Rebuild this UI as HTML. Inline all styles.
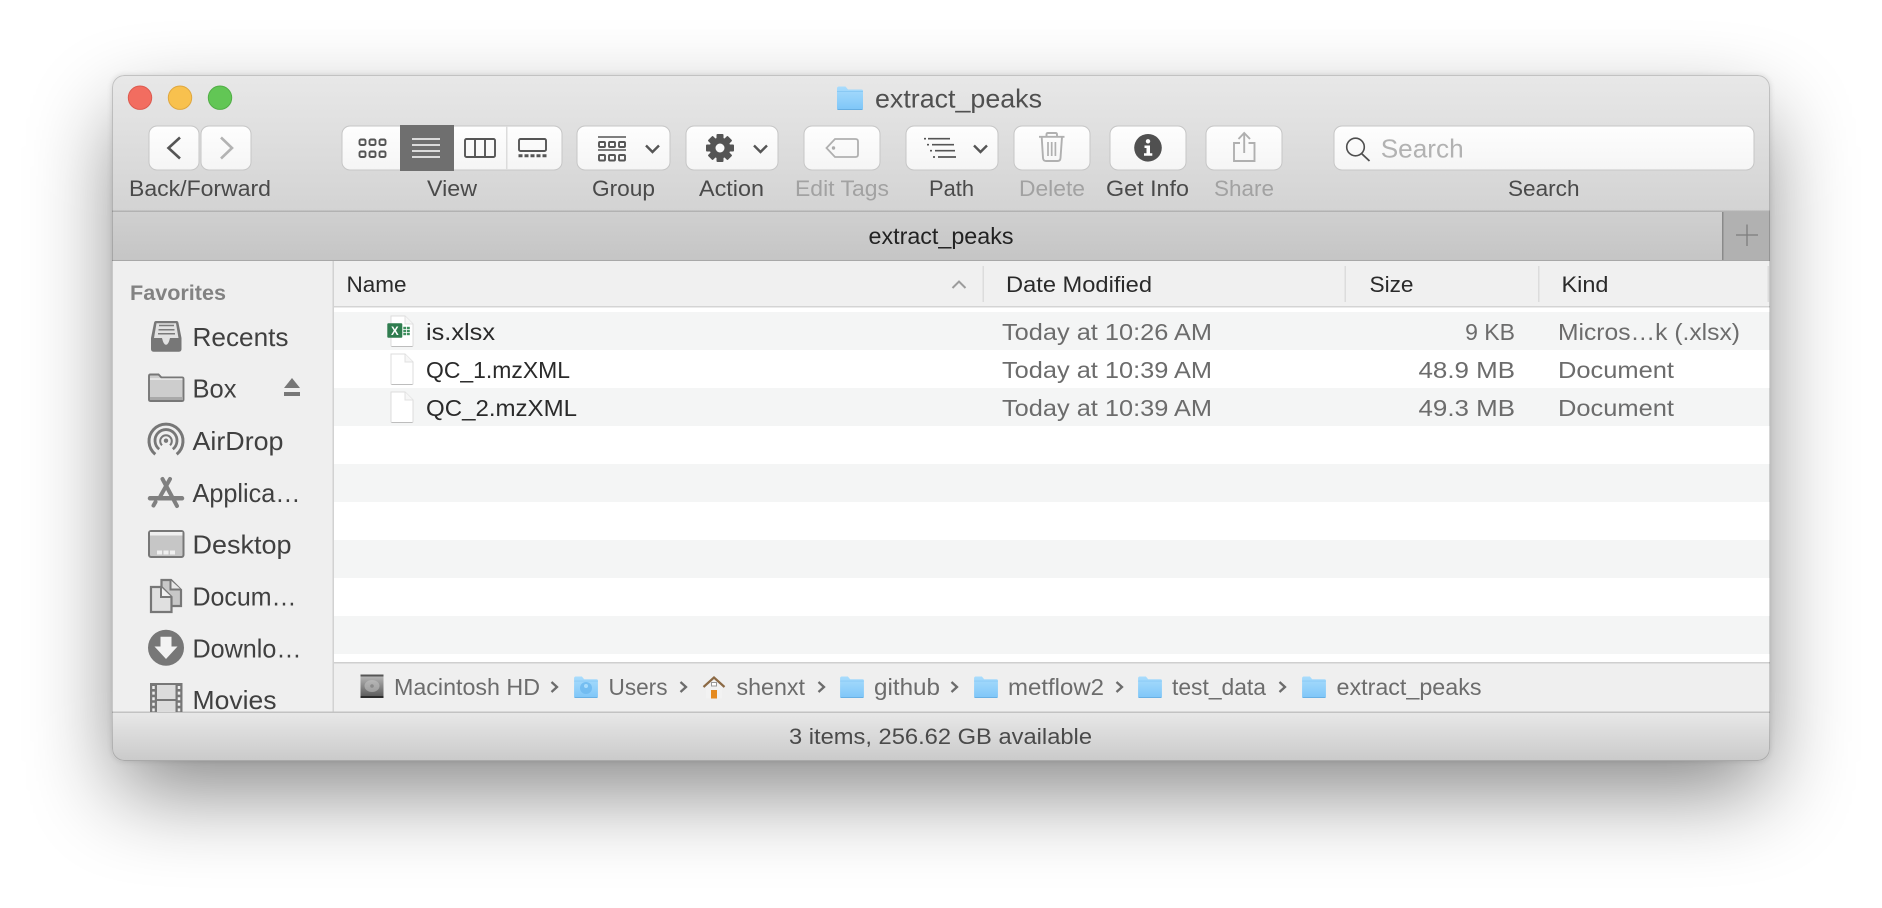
<!DOCTYPE html>
<html><head><meta charset="utf-8"><style>
html,body{margin:0;padding:0;background:#fff;width:1882px;height:908px;overflow:hidden}
#shadow{position:absolute;left:112px;top:75px;width:1658px;height:686px;border-radius:12px;box-shadow:0 36px 88px -6px rgba(0,0,0,.48),0 0 6px rgba(0,0,0,.12)}
svg{position:absolute;left:0;top:0}
text{font-family:"Liberation Sans",sans-serif;white-space:pre}
.l{font-size:22px;fill:#4a4a4a}
.d{font-size:22px;fill:#a2a2a2}
.s{font-size:26px;fill:#404040}
.n{font-size:23px;fill:#2a2a2a}
.g{font-size:23px;fill:#6c6c6c}
.h{font-size:22px;fill:#2a2a2a}
.p{font-size:23px;fill:#6c6c6c}
</style></head><body>
<div id="shadow"></div>
<svg width="1882" height="908" viewBox="0 0 1882 908" xmlns="http://www.w3.org/2000/svg">
<defs>
<clipPath id="win"><rect x="112" y="75" width="1658" height="686" rx="12"/></clipPath>
<clipPath id="side"><rect x="112" y="261" width="221" height="451"/></clipPath>
<linearGradient id="tb" x1="0" y1="0" x2="0" y2="1"><stop offset="0" stop-color="#e8e8e8"/><stop offset="1" stop-color="#d3d3d3"/></linearGradient>
<linearGradient id="tab" x1="0" y1="0" x2="0" y2="1"><stop offset="0" stop-color="#d0d0d0"/><stop offset="1" stop-color="#c5c5c5"/></linearGradient>
<linearGradient id="st" x1="0" y1="0" x2="0" y2="1"><stop offset="0" stop-color="#e8e8e8"/><stop offset="1" stop-color="#cacaca"/></linearGradient>
<linearGradient id="btn" x1="0" y1="0" x2="0" y2="1"><stop offset="0" stop-color="#fefefe"/><stop offset="1" stop-color="#f5f5f5"/></linearGradient>
<linearGradient id="fold" x1="0" y1="0" x2="0" y2="1"><stop offset="0" stop-color="#a9dcfc"/><stop offset="1" stop-color="#7ec6f8"/></linearGradient>
<linearGradient id="hd" x1="0" y1="0" x2="0" y2="1"><stop offset="0" stop-color="#bdbdbd"/><stop offset="1" stop-color="#555"/></linearGradient>
<symbol id="folder" viewBox="0 0 26 24" overflow="visible">
<path d="M0 2.5Q0 .5 2 .5H8.500L11 3.500H24.500Q26 3.500 26 5V22.500Q26 24 24.500 24H1.500Q0 24 0 22.500Z" fill="url(#fold)"/>
<path d="M0 5.500H26" stroke="#6fb9ec" stroke-width="1" opacity=".45"/>
<path d="M.5 23.500H25.500" stroke="#5fa8dc" stroke-width="1" opacity=".8"/>
</symbol>
<symbol id="page" viewBox="0 0 24 32" overflow="visible">
<path d="M1 1H15L23 9V30.500Q23 31.500 22 31.500H2Q1 31.500 1 30.500Z" fill="#fff" stroke="#dcdcdc" stroke-width="1"/>
<path d="M1.500 31.500H22.500" stroke="#bdbdbd" stroke-width="1"/>
<path d="M15 1V9H23" fill="#f6f6f6" stroke="#e0e0e0" stroke-width="1"/>
</symbol>
</defs>

<g clip-path="url(#win)">
<rect x="112" y="75" width="1658" height="136" fill="url(#tb)"/>
<rect x="112" y="211" width="1658" height="50" fill="url(#tab)"/>
<rect x="1722" y="212" width="48" height="49" fill="#b1b1b1"/>
<rect x="1722" y="212" width="1.500" height="49" fill="#8a8a8a"/>
<path d="M1747 224.500V246M1736 235H1758" stroke="#7d7d7d" stroke-width="1.300"/>
<rect x="112" y="210.500" width="1658" height="1.500" fill="#b2b2b2"/>
<rect x="112" y="260" width="1658" height="1.500" fill="#a8a8a8"/>

<!-- main -->
<rect x="334" y="261" width="1436" height="451" fill="#fff"/>
<rect x="334" y="261" width="1436" height="46" fill="#f0f0f0"/>
<rect x="334" y="306" width="1436" height="1.500" fill="#d4d4d4"/>
<rect x="334" y="312" width="1436" height="38" fill="#f4f5f5"/>
<rect x="334" y="388" width="1436" height="38" fill="#f4f5f5"/>
<rect x="334" y="464" width="1436" height="38" fill="#f4f5f5"/>
<rect x="334" y="540" width="1436" height="38" fill="#f4f5f5"/>
<rect x="334" y="616" width="1436" height="38" fill="#f4f5f5"/>
<rect x="334" y="662" width="1436" height="50" fill="#efefef"/>
<rect x="334" y="662" width="1436" height="1.500" fill="#cfcfcf"/>

<!-- sidebar -->
<rect x="112" y="261" width="221" height="451" fill="#efefef"/>
<rect x="332.500" y="261" width="1.500" height="451" fill="#d2d2d2"/>

<!-- status -->
<rect x="112" y="712" width="1658" height="49" fill="url(#st)"/>
<rect x="112" y="711.500" width="1658" height="1.500" fill="#c2c2c2"/>
<rect x="112.500" y="75.500" width="1657" height="685" rx="12" fill="none" stroke="#000" stroke-opacity=".16"/>
</g>

<!-- traffic lights -->
<circle cx="140" cy="97.700" r="11.700" fill="#f26d60" stroke="#dd5a4f" stroke-width="1"/>
<circle cx="180" cy="97.700" r="11.700" fill="#f8c14e" stroke="#e0a73e" stroke-width="1"/>
<circle cx="220" cy="97.700" r="11.700" fill="#62c655" stroke="#51ae46" stroke-width="1"/>

<!-- title -->
<use href="#folder" x="835" y="86" width="30" height="24"/>
<text x="875" y="107.700" font-size="26" fill="#505050" textLength="167" lengthAdjust="spacingAndGlyphs">extract_peaks</text>

<!-- buttons -->
<g fill="url(#btn)" stroke="#c6c6c6" stroke-width="1">
<rect x="149" y="126" width="50" height="44" rx="8"/>
<rect x="201" y="126" width="50" height="44" rx="8"/>
<rect x="342" y="126" width="220" height="44" rx="8"/>
<rect x="577" y="126" width="93" height="44" rx="8"/>
<rect x="686" y="126" width="92" height="44" rx="8"/>
<rect x="804" y="126" width="76" height="44" rx="8"/>
<rect x="906" y="126" width="92" height="44" rx="8"/>
<rect x="1014" y="126" width="76" height="44" rx="8"/>
<rect x="1110" y="126" width="76" height="44" rx="8"/>
<rect x="1206" y="126" width="76" height="44" rx="8"/>
<rect x="1334" y="126" width="420" height="44" rx="8"/>
</g>
<rect x="400" y="125" width="54" height="46" fill="#6f6f6f"/>
<rect x="506" y="126" width="1.500" height="44" fill="#dcdcdc"/>

<!-- back / forward -->
<path d="M180 137.500L168.500 148L180 158.500" fill="none" stroke="#555" stroke-width="2.600"/>
<path d="M221 137.500L232 148L221 158.500" fill="none" stroke="#b3b3b3" stroke-width="2.600"/>

<!-- view icons -->
<g fill="none" stroke="#555" stroke-width="1.900">
<rect x="359.500" y="139.500" width="6" height="5.500" rx="1.500"/><rect x="369.500" y="139.500" width="6" height="5.500" rx="1.500"/><rect x="379.500" y="139.500" width="6" height="5.500" rx="1.500"/>
<rect x="359.500" y="151.500" width="6" height="5.500" rx="1.500"/><rect x="369.500" y="151.500" width="6" height="5.500" rx="1.500"/><rect x="379.500" y="151.500" width="6" height="5.500" rx="1.500"/>
<rect x="465" y="139" width="30" height="18" rx="1.500"/><path d="M475 139V157M485 139V157"/>
<rect x="519" y="139" width="27" height="12" rx="1.500"/>
</g>
<path d="M412 139H440M412 145H440M412 151H440M412 157H440" stroke="#fff" stroke-width="1.600"/>
<path d="M518.500 155.700h4M524.500 155.700h4M530.500 155.700h4M536.500 155.700h4M542.500 155.700h4" stroke="#555" stroke-width="3"/>

<!-- group -->
<g fill="none" stroke="#555" stroke-width="1.900">
<path d="M598 137H626M598 150H626" stroke-width="1.500"/>
<rect x="599" y="142" width="6" height="5" rx="1"/><rect x="609" y="142" width="6" height="5" rx="1"/><rect x="619" y="142" width="6" height="5" rx="1"/>
<rect x="599" y="155" width="6" height="5.500" rx="1"/><rect x="609" y="155" width="6" height="5.500" rx="1"/><rect x="619" y="155" width="6" height="5.500" rx="1"/>
</g>
<path d="M646 145.500L652.500 152L659 145.500M754 145.500L760.500 152L767 145.500M974 145.500L980.500 152L987 145.500" fill="none" stroke="#555" stroke-width="2.400"/>

<!-- gear -->
<g transform="translate(720 148)">
<g fill="#555"><rect x="-3.500" y="-14" width="7" height="28" rx="1"/><rect x="-3.500" y="-14" width="7" height="28" rx="1" transform="rotate(45)"/><rect x="-3.500" y="-14" width="7" height="28" rx="1" transform="rotate(90)"/><rect x="-3.500" y="-14" width="7" height="28" rx="1" transform="rotate(135)"/><circle r="10.500"/></g>
<circle r="4.500" fill="#fbfbfb"/>
</g>

<!-- tag -->
<path d="M835 139H855.500Q858 139 858 141.500V154.500Q858 157 855.500 157H835L826.500 148Z" fill="none" stroke="#b0b0b0" stroke-width="1.800"/>
<circle cx="833.500" cy="148" r="1.700" fill="#acacac"/>

<!-- path icon -->
<path d="M928 138.700H950M932 144.700H954M935 150.700H955M938 157H956" stroke="#555" stroke-width="1.700"/>
<path d="M924 138.700h2M927 144.700h2M930 150.700h2M933 157h2" stroke="#555" stroke-width="1.700"/>

<!-- trash -->
<g fill="none" stroke="#b0b0b0" stroke-width="1.900">
<path d="M1039 136.800H1064.500M1046.500 136.800V134.500Q1046.500 133 1048 133H1055.500Q1057 133 1057 134.500V136.800"/>
<path d="M1041.700 137L1043 158Q1043.200 161 1046 161H1057.500Q1060.300 161 1060.500 158L1062 137"/>
<path d="M1048 142V156M1051.700 142V156M1055.400 142V156" stroke-width="1.700"/>
</g>

<!-- info -->
<circle cx="1148" cy="147.800" r="13.800" fill="#505050"/>
<circle cx="1148" cy="141.300" r="2.200" fill="#fff"/>
<path d="M1144.500 145.500H1150V153.300H1152.300V155.700H1144V153.300H1146.500V148H1144.500Z" fill="#fff"/>

<!-- share -->
<path d="M1240 143H1234V161H1254.500V143H1248.500M1244.200 153V133.500M1238.500 139L1244.200 133L1250 139" fill="none" stroke="#b0b0b0" stroke-width="1.900"/>

<!-- search -->
<circle cx="1355.500" cy="147" r="8.800" fill="none" stroke="#4f4f4f" stroke-width="1.600"/>
<path d="M1361.500 153.500L1369.500 161" stroke="#4f4f4f" stroke-width="1.800"/>
<text x="1380.700" y="157.500" font-size="26" fill="#b2b2b2" textLength="83" lengthAdjust="spacingAndGlyphs">Search</text>

<!-- labels -->
<text class="l" x="129" y="196" textLength="142" lengthAdjust="spacingAndGlyphs">Back/Forward</text>
<text class="l" x="427" y="196" textLength="50" lengthAdjust="spacingAndGlyphs">View</text>
<text class="l" x="592" y="196" textLength="63" lengthAdjust="spacingAndGlyphs">Group</text>
<text class="l" x="699" y="196" textLength="65" lengthAdjust="spacingAndGlyphs">Action</text>
<text class="d" x="795" y="196" textLength="94" lengthAdjust="spacingAndGlyphs">Edit Tags</text>
<text class="l" x="929" y="196" textLength="45" lengthAdjust="spacingAndGlyphs">Path</text>
<text class="d" x="1019" y="196" textLength="66" lengthAdjust="spacingAndGlyphs">Delete</text>
<text class="l" x="1106" y="196" textLength="83" lengthAdjust="spacingAndGlyphs">Get Info</text>
<text class="d" x="1214" y="196" textLength="60" lengthAdjust="spacingAndGlyphs">Share</text>
<text class="l" x="1508" y="196" textLength="71.500" lengthAdjust="spacingAndGlyphs">Search</text>

<!-- tab -->
<text x="868.500" y="244" font-size="23" fill="#222" textLength="145" lengthAdjust="spacingAndGlyphs">extract_peaks</text>

<!-- header -->
<text class="h" x="346.500" y="292" textLength="60" lengthAdjust="spacingAndGlyphs">Name</text>
<path d="M952.500 288L959 281.500L965.500 288" fill="none" stroke="#9c9c9c" stroke-width="2"/>
<rect x="982.500" y="266" width="1.500" height="36" fill="#dcdcdc"/>
<rect x="1344.500" y="266" width="1.500" height="36" fill="#dcdcdc"/>
<rect x="1538" y="266" width="1.500" height="36" fill="#dcdcdc"/>
<rect x="1767.500" y="266" width="1.500" height="36" fill="#dcdcdc"/>
<text class="h" x="1006" y="292" textLength="146" lengthAdjust="spacingAndGlyphs">Date Modified</text>
<text class="h" x="1369.500" y="292" textLength="44" lengthAdjust="spacingAndGlyphs">Size</text>
<text class="h" x="1561.500" y="292" textLength="47" lengthAdjust="spacingAndGlyphs">Kind</text>

<!-- rows -->
<use href="#page" x="390" y="315" width="24" height="32"/>
<rect x="387.300" y="323.300" width="15" height="14.500" rx="1" fill="#2f7d4f"/>
<text x="391" y="335" font-size="11.500" font-weight="bold" fill="#fff">X</text>
<rect x="403.300" y="326.800" width="6.500" height="8.400" fill="#3e8f5e"/>
<path d="M403 329.500h7M403 332.400h7M406.500 326.500V335.500" stroke="#fff" stroke-width=".8"/>
<use href="#page" x="390" y="353" width="24" height="32"/>
<use href="#page" x="390" y="391" width="24" height="32"/>

<text class="n" x="426" y="340" textLength="69" lengthAdjust="spacingAndGlyphs">is.xlsx</text>
<text class="n" x="426" y="378" textLength="144" lengthAdjust="spacingAndGlyphs">QC_1.mzXML</text>
<text class="n" x="426" y="416" textLength="151" lengthAdjust="spacingAndGlyphs">QC_2.mzXML</text>
<text class="g" x="1002" y="340" textLength="210" lengthAdjust="spacingAndGlyphs">Today at 10:26 AM</text>
<text class="g" x="1002" y="378" textLength="210" lengthAdjust="spacingAndGlyphs">Today at 10:39 AM</text>
<text class="g" x="1002" y="416" textLength="210" lengthAdjust="spacingAndGlyphs">Today at 10:39 AM</text>
<text class="g" x="1515" y="340" text-anchor="end">9 KB</text>
<text class="g" x="1418.500" y="378" textLength="96.500" lengthAdjust="spacingAndGlyphs">48.9 MB</text>
<text class="g" x="1418.500" y="416" textLength="96.500" lengthAdjust="spacingAndGlyphs">49.3 MB</text>
<text class="g" x="1558" y="340" textLength="182" lengthAdjust="spacingAndGlyphs">Micros…k (.xlsx)</text>
<text class="g" x="1558" y="378" textLength="116" lengthAdjust="spacingAndGlyphs">Document</text>
<text class="g" x="1558" y="416" textLength="116" lengthAdjust="spacingAndGlyphs">Document</text>

<!-- sidebar content -->
<g clip-path="url(#side)">
<text x="130" y="300" font-size="21" font-weight="bold" fill="#828282" textLength="96" lengthAdjust="spacingAndGlyphs">Favorites</text>
<text class="s" x="192.500" y="346" textLength="96" lengthAdjust="spacingAndGlyphs">Recents</text>
<text class="s" x="192.500" y="397.500" textLength="44" lengthAdjust="spacingAndGlyphs">Box</text>
<text class="s" x="192.500" y="450" textLength="91" lengthAdjust="spacingAndGlyphs">AirDrop</text>
<text class="s" x="192.500" y="502" textLength="108" lengthAdjust="spacingAndGlyphs">Applica…</text>
<text class="s" x="192.500" y="553.500" textLength="99" lengthAdjust="spacingAndGlyphs">Desktop</text>
<text class="s" x="192.500" y="605.700" textLength="104" lengthAdjust="spacingAndGlyphs">Docum…</text>
<text class="s" x="192.500" y="657.500" textLength="109" lengthAdjust="spacingAndGlyphs">Downlo…</text>
<text class="s" x="192.500" y="709" textLength="84" lengthAdjust="spacingAndGlyphs">Movies</text>

<!-- recents -->
<path d="M154 323Q154.300 321 156 321H176.500Q178.200 321 178.500 323L181.500 338V349Q181.500 351.700 179 351.700H153.500Q151 351.700 151 349V338Z" fill="#777"/>
<path d="M156.500 323.200H176L178.500 338H170Q168.500 344.800 166 344.800Q163.500 344.800 162 338H154Z" fill="#e2e2e2"/>
<path d="M159 325.500H174M158.500 329.700H174.500M158 333.700H175" stroke="#7a7a7a" stroke-width="1.500"/>

<!-- box folder -->
<path d="M149 376Q149 374.500 150.500 374.500H158.500L161.500 377.500H182Q183.500 377.500 183.500 379V399.500Q183.500 401 182 401H150.500Q149 401 149 399.500Z" fill="#cdcdcd" stroke="#777" stroke-width="1.900"/>
<rect x="150" y="378.300" width="32.500" height="1.500" fill="#ededed"/>
<rect x="150" y="397" width="33" height="3" fill="#a9a9a9"/>

<!-- eject -->
<path d="M292 378L300 388H284Z" fill="#777"/>
<rect x="284" y="392" width="16" height="4" fill="#777"/>

<!-- airdrop -->
<g fill="none" stroke="#777">
<path d="M155.300 454.300A17 17 0 1 1 176.700 454.300" stroke-width="3"/>
<path d="M159.200 449.200A11 11 0 1 1 172.800 449.200" stroke-width="2.800"/>
<path d="M162 445.300A5.800 5.800 0 1 1 170 445.300" stroke-width="2"/>
</g>
<circle cx="166" cy="440.700" r="2.200" fill="#777"/>

<!-- applications -->
<g fill="none" stroke="#808080" stroke-linecap="round">
<path d="M150 498.300H182" stroke-width="4.500"/>
<path d="M162.500 479L177 506" stroke-width="4"/>
<path d="M170 479L160.500 496" stroke-width="4"/>
<path d="M155.500 502L153.500 505.500" stroke-width="4"/>
</g>

<!-- desktop -->
<rect x="149" y="531" width="34.500" height="26" rx="2" fill="#c6c6c6" stroke="#777" stroke-width="2"/>
<rect x="150" y="532" width="32.500" height="3.500" fill="#f0f0f0"/>
<path d="M157 552.500h5M163.500 552.500h5M170 552.500h5" stroke="#f0f0f0" stroke-width="4"/>

<!-- documents -->
<path d="M161.500 580H171L181 590V606H161.500Z" fill="#c8c8c8" stroke="#777" stroke-width="2.200"/>
<path d="M170.500 580V589.500H181" fill="#e8e8e8" stroke="#777" stroke-width="2"/>
<path d="M151 587H161.500L171.500 597V612H151Z" fill="#e0e0e0" stroke="#777" stroke-width="2.200"/>
<path d="M161 587V597H171.500" fill="#f0f0f0" stroke="#777" stroke-width="2"/>

<!-- downloads -->
<circle cx="166" cy="647.700" r="18" fill="#777"/>
<path d="M160.500 636.700H171.500V646.500H177.500L166 659L154.500 646.500H160.500Z" fill="#f3f3f3"/>

<!-- movies -->
<rect x="151" y="684" width="30" height="34" fill="#dcdcdc" stroke="#777" stroke-width="2"/>
<rect x="150" y="683" width="7" height="36" fill="#777"/>
<rect x="175.500" y="683" width="7" height="36" fill="#777"/>
<path d="M153.500 686V712M179 686V712" stroke="#eee" stroke-width="2.500" stroke-dasharray="3 2.600"/>
<path d="M157 700H176" stroke="#777" stroke-width="2"/>
</g>

<!-- path bar -->
<rect x="360.500" y="674.500" width="23" height="23.500" rx="2" fill="url(#hd)"/>
<rect x="360.500" y="674.500" width="23" height="2" fill="#555"/>
<rect x="360.500" y="696" width="23" height="2" fill="#2c2c2c"/>
<ellipse cx="372" cy="686" rx="7.500" ry="6" fill="#c4c4c4" opacity=".55"/>
<circle cx="372" cy="686" r="1.800" fill="#8a8a8a"/>
<text class="p" x="394" y="695" textLength="146" lengthAdjust="spacingAndGlyphs">Macintosh HD</text>
<g fill="none" stroke="#6c6c6c" stroke-width="2.300">
<path d="M551.500 682L557 687L551.500 692"/>
<path d="M680.500 682L686 687L680.500 692"/>
<path d="M818.500 682L824 687L818.500 692"/>
<path d="M951.500 682L957 687L951.500 692"/>
<path d="M1116.500 682L1122 687L1116.500 692"/>
<path d="M1279.500 682L1285 687L1279.500 692"/>
</g>
<use href="#folder" x="573" y="676" width="26" height="22"/>
<circle cx="586" cy="688" r="6" fill="#6cb8ef" opacity=".8"/>
<circle cx="586" cy="686" r="2" fill="#a9dcfc"/>
<text class="p" x="608.500" y="695" textLength="59" lengthAdjust="spacingAndGlyphs">Users</text>
<!-- home -->
<path d="M706 686L714 679L722 686V698.500H706Z" fill="#f2f2f2"/>
<path d="M703.500 687L714 677.500L724.500 687" fill="none" stroke="#8c6a45" stroke-width="2.200"/>
<rect x="711" y="690" width="6" height="8.500" fill="#e58a20"/>
<rect x="711.500" y="682.500" width="5" height="3.500" fill="#fff" stroke="#999" stroke-width="1"/>
<text class="p" x="736.500" y="695" textLength="68.500" lengthAdjust="spacingAndGlyphs">shenxt</text>
<use href="#folder" x="839" y="676" width="26" height="22"/>
<text class="p" x="874" y="695" textLength="66" lengthAdjust="spacingAndGlyphs">github</text>
<use href="#folder" x="973" y="676" width="26" height="22"/>
<text class="p" x="1008" y="695" textLength="96" lengthAdjust="spacingAndGlyphs">metflow2</text>
<use href="#folder" x="1137" y="676" width="26" height="22"/>
<text class="p" x="1172" y="695" textLength="94" lengthAdjust="spacingAndGlyphs">test_data</text>
<use href="#folder" x="1301" y="676" width="26" height="22"/>
<text class="p" x="1336.500" y="695" textLength="145" lengthAdjust="spacingAndGlyphs">extract_peaks</text>

<!-- status -->
<text x="789" y="744" font-size="22.500" fill="#4a4a4a" textLength="303" lengthAdjust="spacingAndGlyphs">3 items, 256.62 GB available</text>
</svg>
</body></html>
